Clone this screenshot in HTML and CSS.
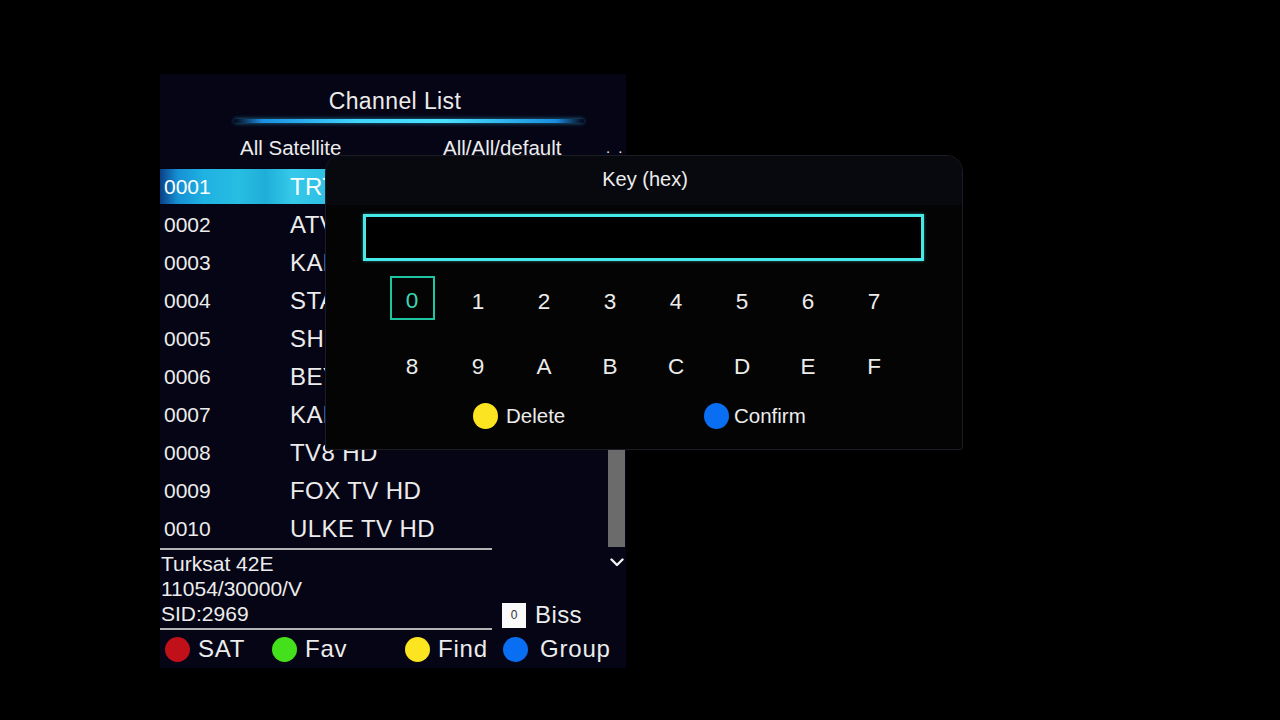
FILE: index.html
```html
<!DOCTYPE html>
<html>
<head>
<meta charset="utf-8">
<link rel="stylesheet" href="styles.css">
</head>
<body>
<div class="screen">
  <div class="panel">
    <div class="title">Channel List</div>
    <div class="glow"></div>
    <div class="subhead">
      <span class="sat">All Satellite</span>
      <span class="grp">All/All/default</span>
      <span class="dots">. .</span>
    </div>
    <div class="listwrap">
      <div class="list">
        <div class="row active"><span class="num">0001</span><span class="name">TRT 1 HD</span></div>
        <div class="row"><span class="num">0002</span><span class="name">ATV HD</span></div>
        <div class="row"><span class="num">0003</span><span class="name">KANAL D HD</span></div>
        <div class="row"><span class="num">0004</span><span class="name">STAR TV HD</span></div>
        <div class="row"><span class="num">0005</span><span class="name">SHOW TV HD</span></div>
        <div class="row"><span class="num">0006</span><span class="name">BEYAZ TV HD</span></div>
        <div class="row"><span class="num">0007</span><span class="name">KANAL 7 HD</span></div>
        <div class="row"><span class="num">0008</span><span class="name">TV8 HD</span></div>
        <div class="row"><span class="num">0009</span><span class="name">FOX TV HD</span></div>
        <div class="row"><span class="num">0010</span><span class="name">ULKE TV HD</span></div>
      </div>
      <div class="scroll"><div class="thumb"></div></div>
    </div>
    <div class="info">
      <div class="infoleft">
        <div class="line">Turksat 42E</div>
        <div class="line">11054/30000/V</div>
        <div class="line">SID:2969</div>
      </div>
      <div class="inforight">
        <svg class="chev" width="14" height="9" viewBox="0 0 14 9"><path d="M1.5 1.5 L7 7 L12.5 1.5" fill="none" stroke="#f2f2f2" stroke-width="2.4" stroke-linecap="round" stroke-linejoin="round"/></svg>
        <div class="biss"><span class="bissbox">0</span><span class="bisstxt">Biss</span></div>
      </div>
    </div>
    <div class="buttons">
      <div class="btn b1"><span class="dot red"></span>SAT</div>
      <div class="btn b2"><span class="dot green"></span>Fav</div>
      <div class="btn b3"><span class="dot yellow"></span>Find</div>
      <div class="btn b4"><span class="dot blue"></span>Group</div>
    </div>
  </div>

  <div class="popup">
    <div class="phead">Key (hex)</div>
    <div class="pbody">
      <div class="input"></div>
      <div class="keys">
        <div class="key sel"><span>0</span></div>
        <div class="key"><span>1</span></div>
        <div class="key"><span>2</span></div>
        <div class="key"><span>3</span></div>
        <div class="key"><span>4</span></div>
        <div class="key"><span>5</span></div>
        <div class="key"><span>6</span></div>
        <div class="key"><span>7</span></div>
        <div class="key"><span>8</span></div>
        <div class="key"><span>9</span></div>
        <div class="key"><span>A</span></div>
        <div class="key"><span>B</span></div>
        <div class="key"><span>C</span></div>
        <div class="key"><span>D</span></div>
        <div class="key"><span>E</span></div>
        <div class="key"><span>F</span></div>
      </div>
      <div class="pactions">
        <div class="act del"><span class="pdot yellow"></span>Delete</div>
        <div class="act conf"><span class="pdot blue"></span>Confirm</div>
      </div>
    </div>
  </div>
</div>
</body>
</html>
```

FILE: styles.css
```css
html, body {
  margin: 0;
  padding: 0;
  background: #000;
}
body {
  width: 1280px;
  height: 720px;
  overflow: hidden;
  font-family: "Liberation Sans", Arial, sans-serif;
  color: #ececec;
}
.screen {
  position: relative;
  width: 1280px;
  height: 720px;
  padding: 74px 0 0 160px;
  box-sizing: border-box;
}
.panel {
  width: 466px;
  height: 594px;
  background: #050515;
  display: flex;
  flex-direction: column;
  overflow: hidden;
}
.title {
  height: 45px;
  padding-top: 9px;
  box-sizing: border-box;
  line-height: 36px;
  font-size: 23px;
  letter-spacing: 0.4px;
  text-align: center;
  padding-left: 4px;
}
.glow {
  margin-left: 74px;
  width: 350px;
  height: 4px;
  border-radius: 2px;
  background: linear-gradient(90deg, rgba(20,120,220,0) 0%, #1a8ee0 8%, #3fd6ff 35%, #4ae2ff 60%, #1a8ee0 92%, rgba(20,120,220,0) 100%);
  box-shadow: 0 0 4px rgba(60,200,255,0.6);
}
.subhead {
  display: flex;
  height: 30px;
  margin-top: 10px;
  line-height: 30px;
  font-size: 20.5px;
  padding-left: 80px;
  white-space: nowrap;
}
.subhead span { flex: none; }
.sat { width: 203px; }
.grp { width: 163px; }
.dots { font-size: 15px; letter-spacing: 2px; }
.listwrap {
  display: flex;
  margin-top: 5px;
  height: 380px;
}
.list {
  width: 440px;
}
.row {
  height: 38px;
  display: flex;
  align-items: center;
  padding-left: 4px;
  padding-top: 1px;
  box-sizing: border-box;
}
.row.active {
  background: linear-gradient(90deg, #0b3f86 0%, #1690d4 4%, #1fb2e2 10%, #28bde2 18%, #1faed8 24%, #36c9ea 30%, #2cbde2 40%, #3fd6f2 52%, #44dcf6 100%);
  background-size: 100% 35px;
  background-position: 0 1px;
  background-repeat: no-repeat;
  color: #fff;
}
.num {
  width: 126px;
  font-size: 21px;
}
.name {
  font-size: 24px;
  letter-spacing: 0.4px;
  white-space: nowrap;
}
.scroll {
  width: 17px;
  margin-left: 8px;
  padding-top: 2px;
}
.thumb {
  height: 377px;
  background: #6b6b6b;
}
.info {
  display: flex;
  height: 83px;
}
.infoleft {
  width: 332px;
  border-top: 2px solid #b4b4b4;
  border-bottom: 2px solid #b4b4b4;
  box-sizing: border-box;
  padding-top: 1px;
}
.line {
  height: 25px;
  line-height: 26px;
  font-size: 21px;
  padding-left: 1px;
}
.inforight {
  flex: 1;
  display: flex;
  flex-direction: column;
}
.chev {
  align-self: flex-end;
  margin: 10px 2px 0 0;
}
.biss {
  margin-top: auto;
  margin-bottom: 1px;
  margin-left: 10px;
  display: flex;
  align-items: center;
  height: 28px;
}
.bissbox {
  width: 24px;
  height: 25px;
  background: #fafafa;
  color: #333;
  font-size: 12px;
  line-height: 25px;
  text-align: center;
}
.bisstxt {
  margin-left: 9px;
  font-size: 24px;
  letter-spacing: 0.4px;
}
.buttons {
  display: flex;
  height: 38px;
  align-items: center;
  padding-left: 5px;
  font-size: 24px;
  letter-spacing: 0.8px;
}
.btn {
  display: flex;
  align-items: center;
}
.b1 { width: 107px; }
.b2 { width: 133px; }
.b3 { width: 98px; }
.dot {
  width: 25px;
  height: 25px;
  border-radius: 50%;
  margin-right: 8px;
  flex: none;
}
.b4 .dot { margin-right: 12px; }
.red { background: #c0101a; }
.green { background: #44e01c; }
.yellow { background: #fbe420; }
.blue { background: #0a6ef2; }

.popup {
  position: absolute;
  left: 325px;
  top: 155px;
  width: 638px;
  height: 295px;
  box-sizing: border-box;
  border: 1px solid #1c1c24;
  border-radius: 16px 16px 3px 3px;
  background: #040404;
  overflow: hidden;
}
.phead {
  height: 49px;
  background: #08080f;
  text-align: center;
  line-height: 46px;
  font-size: 20px;
  padding-left: 2px;
}
.pbody {
  padding-top: 9px;
}
.input {
  margin-left: 37px;
  width: 561px;
  height: 47px;
  box-sizing: border-box;
  border: 3px solid #46e8e8;
  background: #000;
  box-shadow: 0 0 3px rgba(70,232,232,0.5);
}
.keys {
  margin-top: 7px;
  margin-left: 53px;
  display: grid;
  grid-template-columns: repeat(8, 66px);
  grid-auto-rows: 65px;
}
.key {
  display: flex;
  align-items: center;
  justify-content: center;
  font-size: 22.5px;
}
.key span {
  width: 45px;
  height: 44px;
  box-sizing: border-box;
  display: flex;
  align-items: center;
  justify-content: center;
  padding-top: 3px;
}
.key.sel span {
  border: 2px solid #1cc6a0;
  color: #3cd8b2;
  margin-top: -6px;
  padding-top: 7px;
}
.pactions {
  display: flex;
  height: 36px;
  align-items: center;
  padding-left: 147px;
  font-size: 20.5px;
}
.act {
  display: flex;
  align-items: center;
}
.del { width: 231px; }
.pdot {
  width: 25px;
  height: 26px;
  border-radius: 50%;
  margin-right: 8px;
}
.conf .pdot { margin-right: 5px; }
```
